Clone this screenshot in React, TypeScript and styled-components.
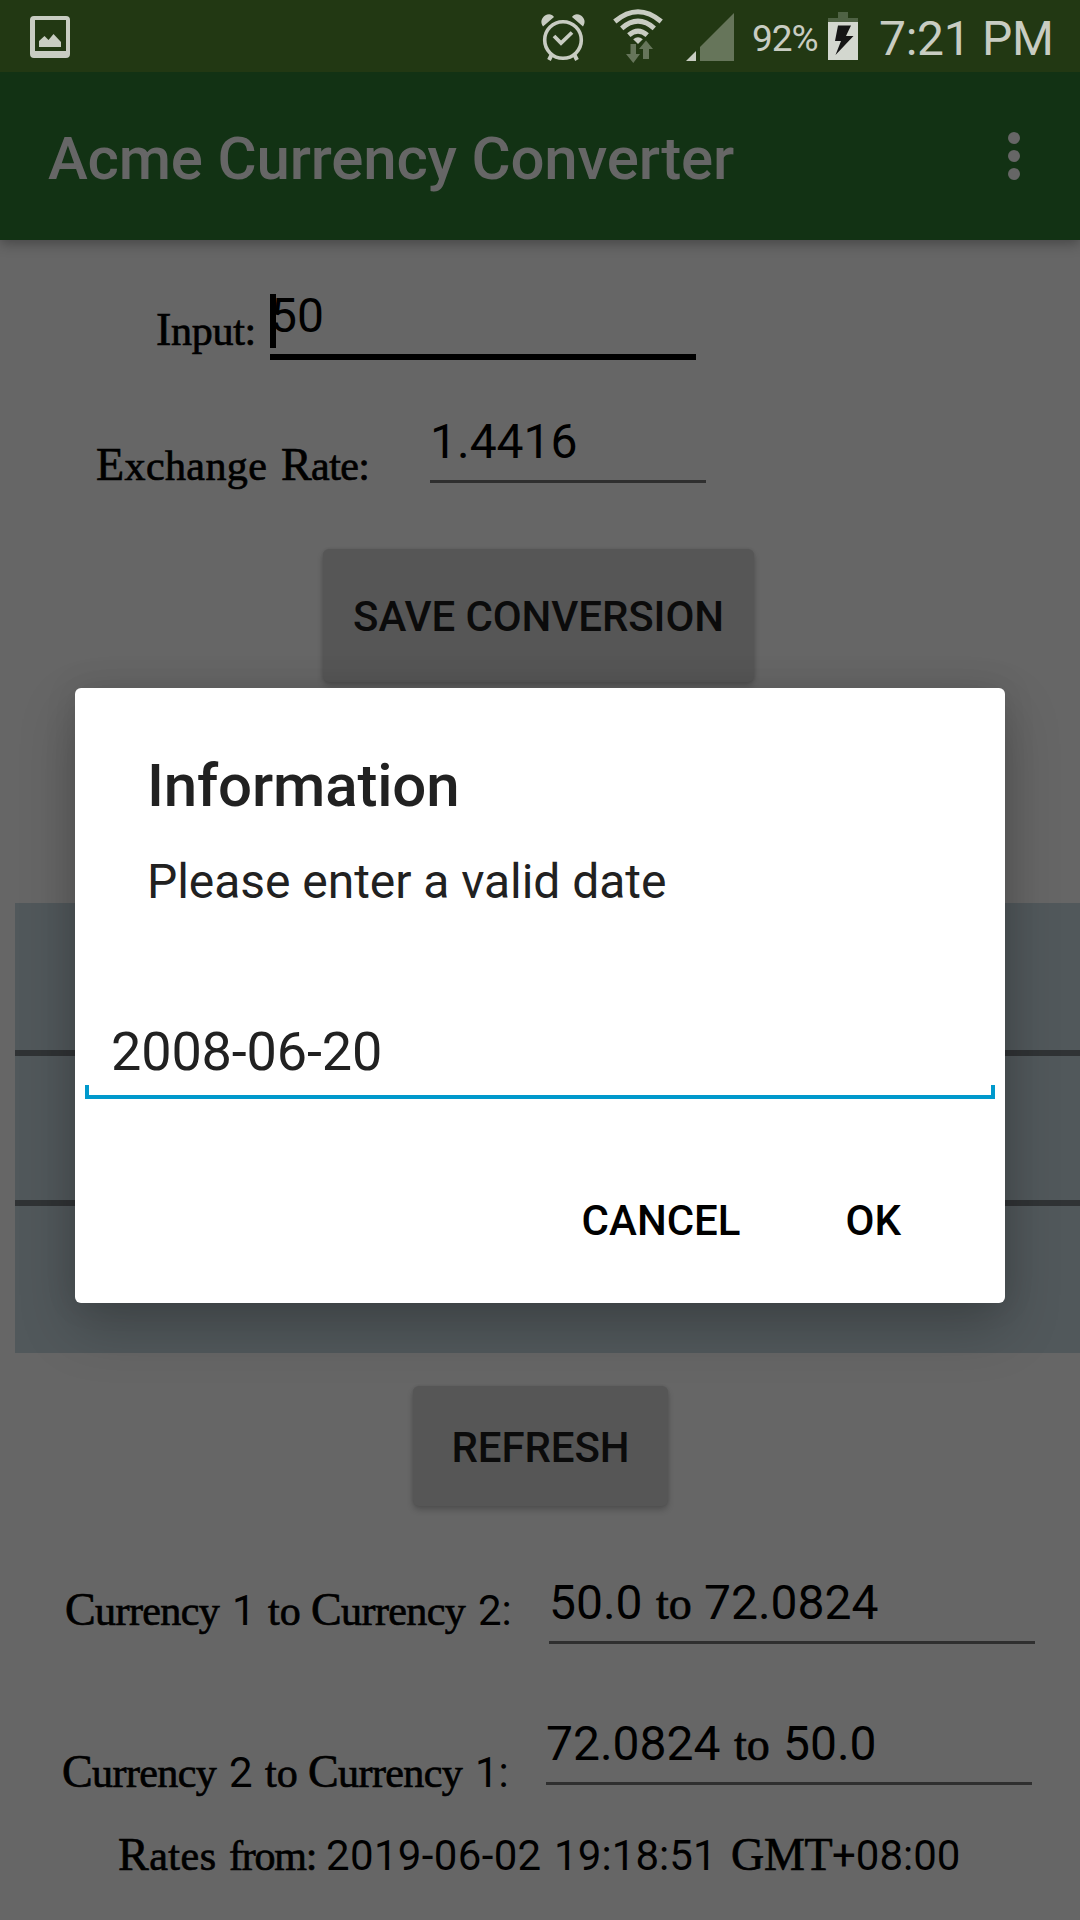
import React from "react";
import styled, { createGlobalStyle } from "styled-components";

const GlobalStyle = createGlobalStyle`
  * { box-sizing: border-box; }
  body { margin: 0; background: #666666; }
`;

const Screen = styled.div`
  position: relative;
  display: flex;
  flex-direction: column;
  width: 1080px;
  height: 1920px;
  overflow: hidden;
  background: #666666;
  color: #000;
  font-family: Roboto, "Liberation Sans", sans-serif;
`;

const StatusBar = styled.header`
  display: flex;
  align-items: center;
  height: 72px;
  flex: none;
  padding-left: 29px;
  background: #223813;
  color: #c8ccc2;
`;

const StatusIcon = styled.svg<{ $gap?: number }>`
  flex: none;
  display: block;
  margin-left: ${(p) => p.$gap ?? 0}px;
`;

const Battery = styled.span`
  width: 75px;
  flex: none;
  font-size: 37px;
  line-height: 72px;
  letter-spacing: -1px;
  padding-top: 5px;
  white-space: nowrap;
`;

const Clock = styled.time`
  font-size: 48px;
  line-height: 72px;
  letter-spacing: -0.3px;
  padding-top: 5px;
  margin-left: 20px;
  white-space: nowrap;
`;

const AppBar = styled.div`
  position: relative;
  display: flex;
  align-items: center;
  justify-content: space-between;
  height: 168px;
  flex: none;
  padding: 0 56px 0 48px;
  background: #123214;
  box-shadow: 0 4px 12px rgba(0, 0, 0, 0.3);
  clip-path: inset(0 0 -24px 0);
  color: #666666;
`;

const AppTitle = styled.h1`
  margin: 6px 0 0;
  font-size: 60px;
  font-weight: 500;
  line-height: 70px;
  letter-spacing: -0.18px;
  white-space: nowrap;
`;

const Form = styled.main`
  display: flex;
  flex-direction: column;
  align-items: flex-start;
`;

const FormRow = styled.div<{ $height: number; $indent: number }>`
  display: flex;
  align-items: flex-end;
  height: ${(p) => p.$height}px;
  padding-left: ${(p) => p.$indent}px;
`;

const Label = styled.label<{ $width?: number; $drop?: number }>`
  display: flex;
  align-items: baseline;
  flex: none;
  width: ${(p) => (p.$width ? `${p.$width}px` : "auto")};
  margin-bottom: ${(p) => p.$drop ?? 0}px;
  font-size: 42px;
  line-height: 50px;
  white-space: nowrap;
`;

const Word = styled.span<{ $width?: number; $track?: number }>`
  flex: none;
  width: ${(p) => (p.$width ? `${p.$width}px` : "auto")};
  letter-spacing: ${(p) => p.$track ?? 0}px;
`;

const AntiqueWord = styled(Word)<{ $size?: number }>`
  font-family: "Liberation Serif", serif;
  font-size: ${(p) => p.$size ?? 42}px;
  line-height: 1;
  -webkit-text-stroke: 0.7px #000;
`;

const CapitalWord = styled(AntiqueWord)`
  &::first-letter { font-size: 46px; }
`;

const Field = styled.div<{ $width: number; $focused?: boolean }>`
  position: relative;
  display: flex;
  align-items: baseline;
  flex: none;
  width: ${(p) => p.$width}px;
  height: ${(p) => (p.$focused ? 72 : 69)}px;
  border-bottom: ${(p) => (p.$focused ? "6px solid #000" : "3px solid #2f2f2f")};
  font-size: 48px;
  line-height: 56px;
  white-space: nowrap;
`;

const Caret = styled.i`
  position: absolute;
  left: 0;
  top: 6px;
  width: 6px;
  height: 54px;
  background: #000;
`;

const RaisedButton = styled.button<{ $w: number; $h: number; $left: number; $top: number; $nudge: number }>`
  width: ${(p) => p.$w}px;
  height: ${(p) => p.$h}px;
  margin: ${(p) => p.$top}px 0 0 ${(p) => p.$left}px;
  padding: ${(p) => p.$nudge}px 0 0;
  border: 0;
  border-radius: 6px;
  background: #565656;
  box-shadow: 0 4px 6px rgba(0, 0, 0, 0.2), 0 0 3px rgba(0, 0, 0, 0.1);
  color: #0b0b0b;
  font: 500 42px/50px Roboto, "Liberation Sans", sans-serif;
  letter-spacing: -0.1px;
  white-space: nowrap;
`;

const CurrencyList = styled.div`
  align-self: stretch;
  height: 450px;
  margin: 221px 0 0 15px;
  background: #51585b;
`;

const CurrencyRow = styled.div<{ $height: number }>`
  height: ${(p) => p.$height}px;
  & + & { border-top: 6px solid #303335; }
`;

const RatesLine = styled.div`
  margin: 46px 0 0 118px;
`;

const Dialog = styled.section`
  position: absolute;
  left: 75px;
  top: 688px;
  display: flex;
  flex-direction: column;
  width: 930px;
  height: 615px;
  border-radius: 6px;
  background: #fff;
  box-shadow: 0 24px 56px rgba(0, 0, 0, 0.22), 0 0 32px rgba(0, 0, 0, 0.1);
  color: #212121;
`;

const DialogTitle = styled.h2`
  margin: 63px 0 0 72px;
  font-size: 60px;
  font-weight: 500;
  line-height: 70px;
  letter-spacing: -0.15px;
`;

const DialogMessage = styled.p`
  margin: 33px 0 0 72px;
  font-size: 48px;
  line-height: 56px;
  letter-spacing: -0.05px;
`;

const DateField = styled.div`
  position: relative;
  width: 910px;
  margin: 110px 0 0 10px;
  padding-left: 26px;
  height: 79px;
  border-bottom: 4px solid #0099cc;
  font-size: 54px;
  line-height: 64px;
  letter-spacing: -0.15px;
  &::before, &::after {
    content: "";
    position: absolute;
    bottom: 0;
    width: 4px;
    height: 10px;
    background: #0099cc;
  }
  &::before { left: 0; }
  &::after { right: 0; }
`;

const DialogActions = styled.div`
  display: flex;
  justify-content: flex-end;
  gap: 105px;
  margin-top: 97px;
  padding-right: 104px;
`;

const TextButton = styled.button`
  padding: 0;
  border: 0;
  background: none;
  color: #000;
  font: 500 42px/50px Roboto, "Liberation Sans", sans-serif;
`;

const PictureIcon = () => (
  <StatusIcon width="42" height="72" viewBox="29 0 42 72">
    <path fill="#c8ccc2" fillRule="evenodd" d="M34 16H66Q70 16 70 20V54Q70 58 66 58H34Q30 58 30 54V20Q30 16 34 16ZM35 20V51H66V20Z" />
    <path fill="#c8ccc2" d="M39 41L44.500 36L48.500 40L53.500 34L61 42V47H39Z" />
  </StatusIcon>
);

const SystemIcons = () => (
  <StatusIcon $gap={469} width="212" height="72" viewBox="540 0 212 72">
    <g fill="none" stroke="#c8ccc2">
      <circle cx="563" cy="40" r="18.300" strokeWidth="3.600" />
      <path d="M554 36L561 43L572 32.500" strokeWidth="3.800" />
      <path d="M551.500 55L549 60M574.500 55L577 60" strokeWidth="4" />
      <path d="M614.800 21.500Q638 2 661.200 21.500M621.700 28.300Q638 14 654.300 28.300M628.800 35.200Q638 27 647.200 35.200" strokeWidth="5" />
    </g>
    <path fill="#c8ccc2" d="M543 26.500C540 22 541.500 18 545 15.500C548.500 13.500 552 14 554 17ZM583 26.500C586 22 584.500 18 581 15.500C577.500 13.500 574 14 572 17Z" />
    <path fill="#c8ccc2" d="M638 44L633.200 39.300Q638 35 642.800 39.300Z" />
    <path fill="#66755a" d="M630.500 44H636V54H640L633.300 63L626 54H630.500ZM646 40.500L653 49H649V59H643V49H639Z" />
    <path fill="#c8ccc2" d="M696 51V61H686Z" />
    <path fill="#66755a" d="M734 13V61H700V47Z" />
  </StatusIcon>
);

const ChargingIcon = () => (
  <StatusIcon width="32" height="72" viewBox="827 0 32 72">
    <path fill="#4f6244" d="M838 12H848V18H858V22H828V18H838Z" />
    <path fill="#d3d7cf" d="M828 22H858V60H828Z" />
    <path fill="#151515" d="M838 25.500H851L846 36H853.500L835.500 55L841 41H835Z" />
  </StatusIcon>
);

const OverflowIcon = () => (
  <svg width="20" height="56" viewBox="0 0 20 56" fill="#666666">
    <circle cx="10" cy="10" r="6" />
    <circle cx="10" cy="28" r="6" />
    <circle cx="10" cy="46" r="6" />
  </svg>
);

const PairLabel = ({ from, to, width, drop }: { from: string; to: string; width: number; drop: number }) => (
  <Label $width={width} $drop={drop}>
    <CapitalWord $width={167} $track={-0.6}>Currency</CapitalWord>
    <Word $width={36}>{from}</Word>
    <AntiqueWord $width={43}>to</AntiqueWord>
    <CapitalWord $width={167} $track={-0.6}>Currency</CapitalWord>
    <Word>{to}:</Word>
  </Label>
);

export default function App() {
  return (
    <>
      <GlobalStyle />
      <Screen>
        <StatusBar>
          <PictureIcon />
          <SystemIcons />
          <Battery>92%</Battery>
          <ChargingIcon />
          <Clock>7:21 PM</Clock>
        </StatusBar>
        <AppBar>
          <AppTitle>Acme Currency Converter</AppTitle>
          <OverflowIcon />
        </AppBar>
        <Form>
          <FormRow $height={120} $indent={156}>
            <Label $width={114} $drop={7}>
              <CapitalWord $track={-0.3}>Input:</CapitalWord>
            </Label>
            <Field $width={426} $focused>
              50
              <Caret />
            </Field>
          </FormRow>
          <FormRow $height={123} $indent={96}>
            <Label $width={334} $drop={-5}>
              <CapitalWord $width={185} $track={0.4}>Exchange</CapitalWord>
              <CapitalWord $track={-0.6}>Rate:</CapitalWord>
            </Label>
            <Field $width={276}>1.4416</Field>
          </FormRow>
          <RaisedButton $w={431} $h={133} $left={323} $top={66} $nudge={2}>SAVE CONVERSION</RaisedButton>
          <CurrencyList>
            <CurrencyRow $height={147} />
            <CurrencyRow $height={150} />
            <CurrencyRow $height={153} />
          </CurrencyList>
          <RaisedButton $w={255} $h={120} $left={413} $top={33} $nudge={4}>REFRESH</RaisedButton>
          <FormRow $height={138} $indent={65}>
            <PairLabel from="1" to="2" width={484} drop={8} />
            <Field $width={486}>
              <Word $width={107}>50.0</Word>
              <AntiqueWord $width={48} $size={46}>to</AntiqueWord>
              <Word>72.0824</Word>
            </Field>
          </FormRow>
          <FormRow $height={141} $indent={62}>
            <PairLabel from="2" to="1" width={484} drop={-13} />
            <Field $width={486}>
              <Word $width={188}>72.0824</Word>
              <AntiqueWord $width={49} $size={46}>to</AntiqueWord>
              <Word>50.0</Word>
            </Field>
          </FormRow>
          <RatesLine>
            <Label as="div">
              <CapitalWord $width={111} $track={0.5}>Rates</CapitalWord>
              <AntiqueWord $width={97} $track={-1.2}>from:</AntiqueWord>
              <Word $width={228} $track={0.35}>2019-06-02</Word>
              <Word $width={177} $track={0.1}>19:18:51</Word>
              <AntiqueWord $width={101} $size={46} $track={-0.3}>GMT</AntiqueWord>
              <Word>+08:00</Word>
            </Label>
          </RatesLine>
        </Form>
        <Dialog role="dialog">
          <DialogTitle>Information</DialogTitle>
          <DialogMessage>Please enter a valid date</DialogMessage>
          <DateField>2008-06-20</DateField>
          <DialogActions>
            <TextButton>CANCEL</TextButton>
            <TextButton>OK</TextButton>
          </DialogActions>
        </Dialog>
      </Screen>
    </>
  );
}
